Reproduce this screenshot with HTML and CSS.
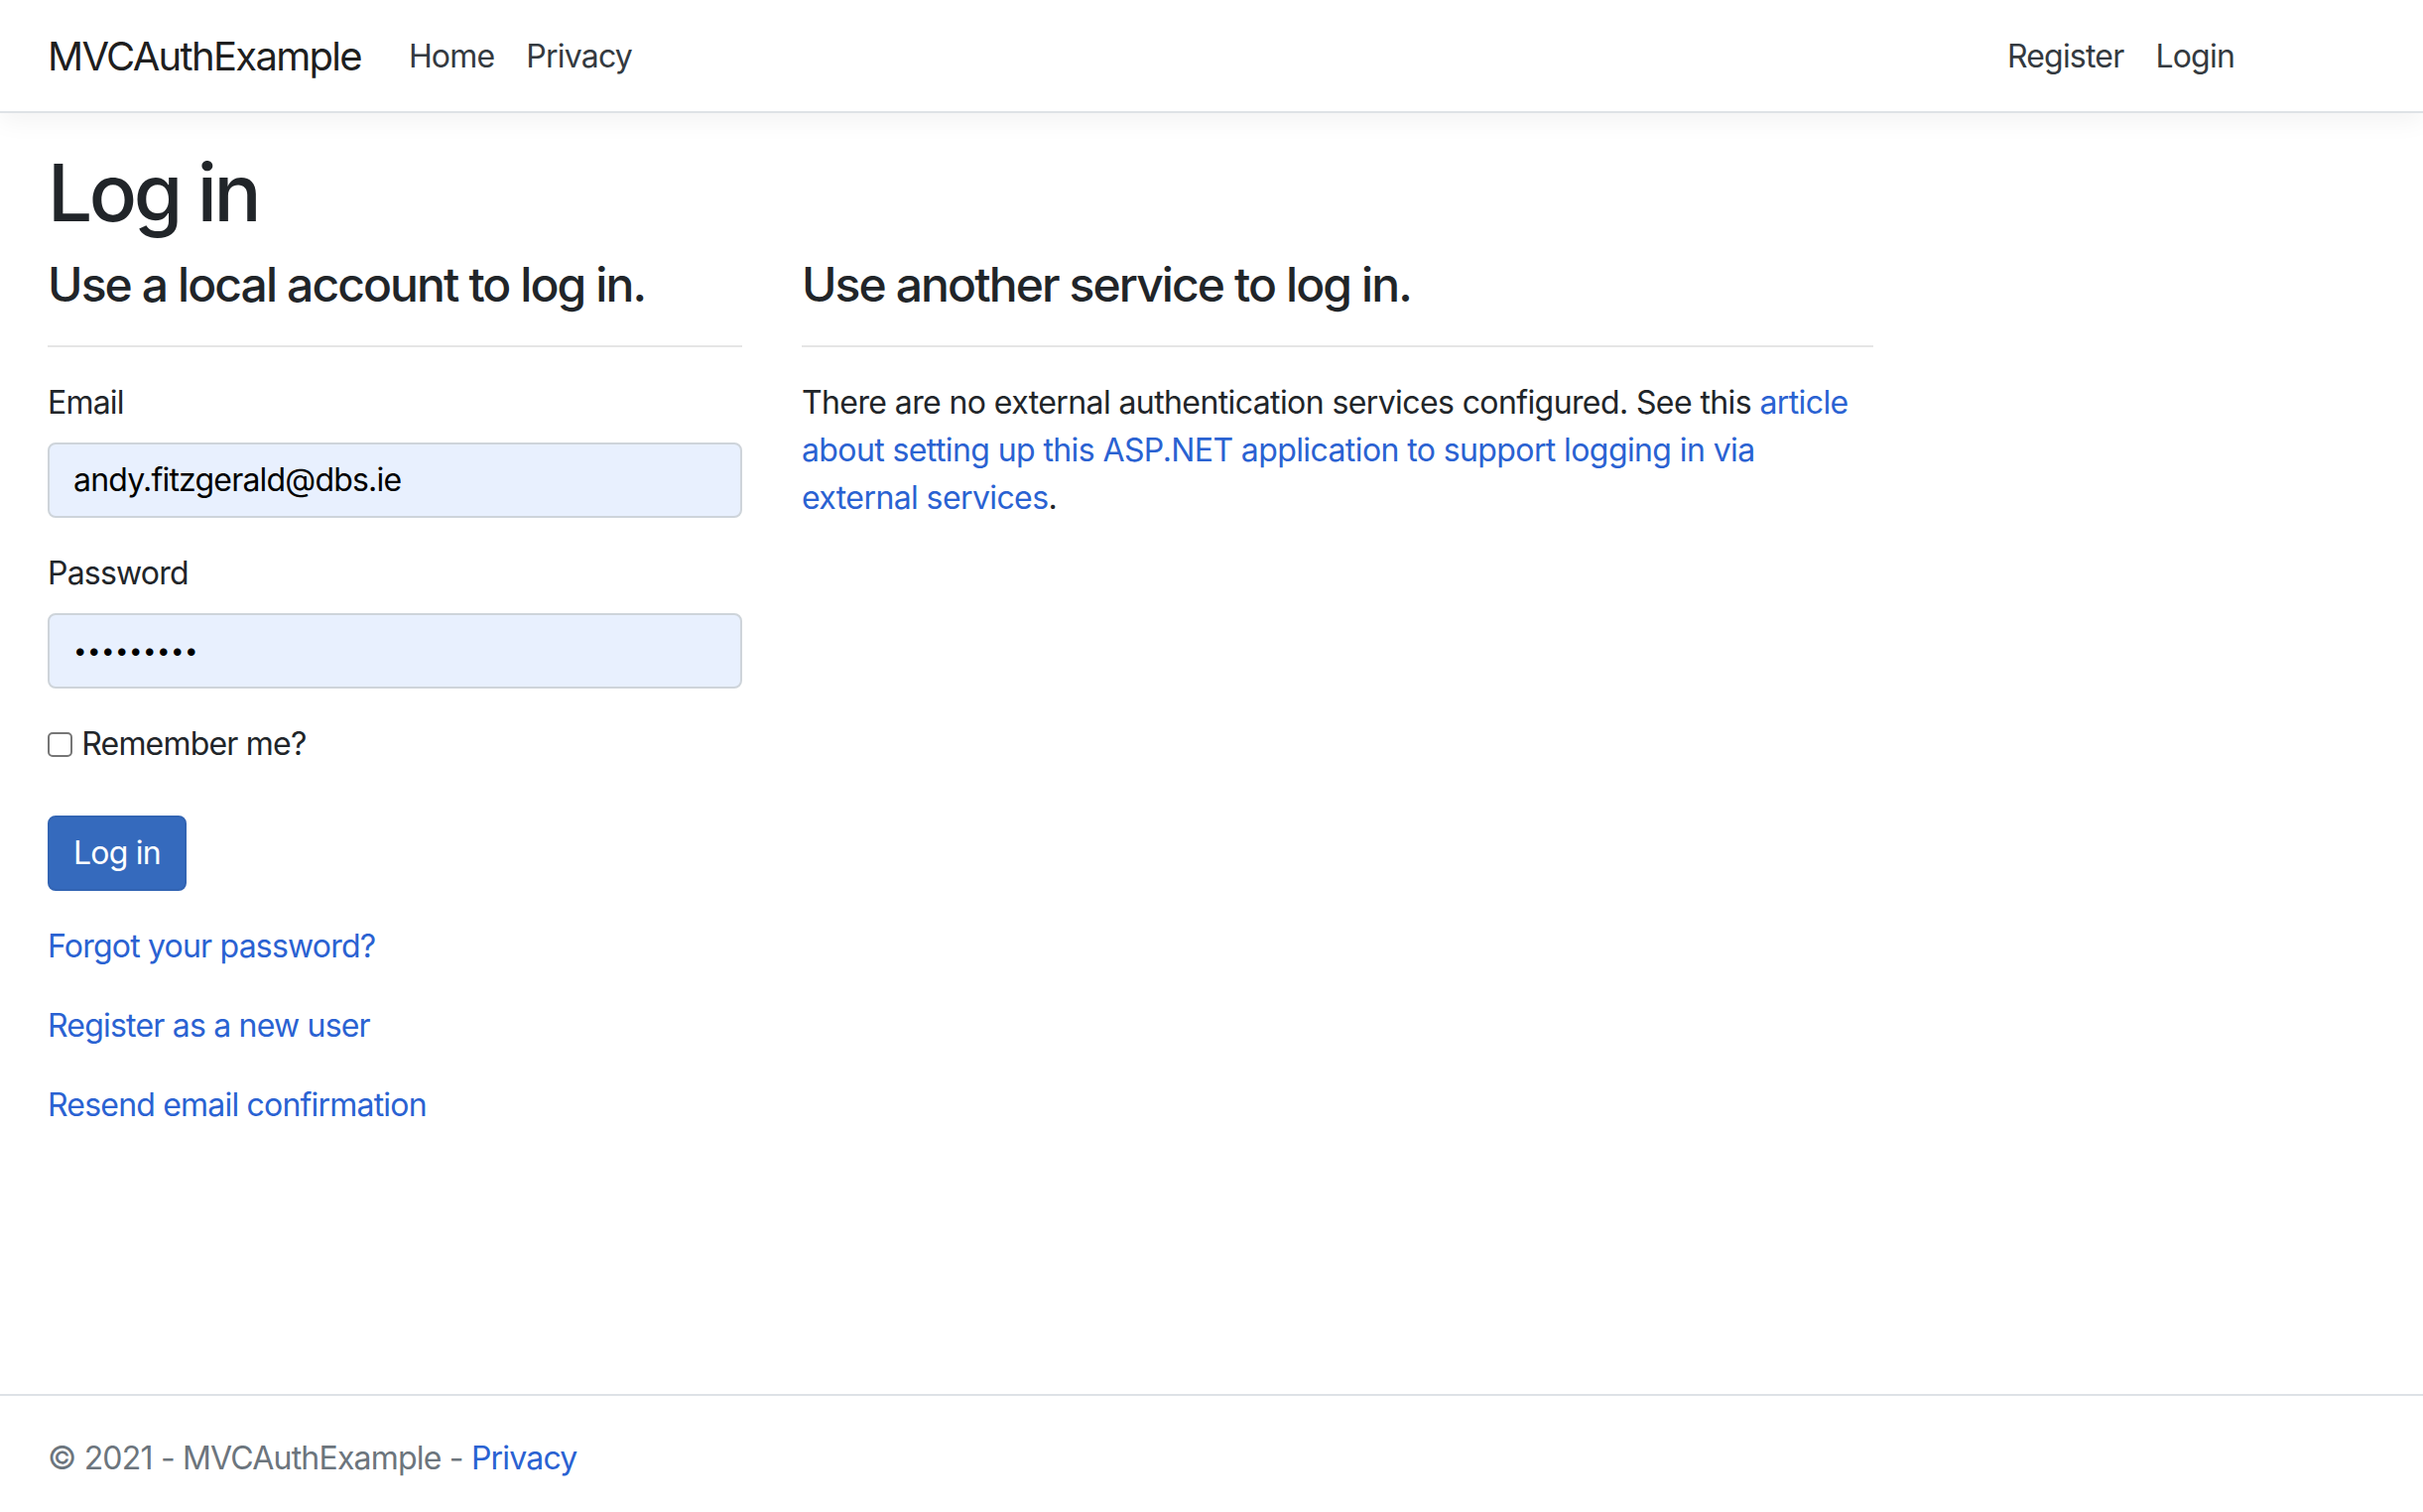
FILE: index.html
```html
<!DOCTYPE html>
<html lang="en">
<head>
<meta charset="utf-8">
<title>Log in - MVCAuthExample</title>
<link rel="stylesheet" href="styles.css">
</head>
<body>
<header>
  <nav class="navbar">
    <div class="nav-container">
      <a class="brand" href="#">MVCAuthExample</a>
      <ul class="nav nav-left">
        <li><a class="nav-link" href="#">Home</a></li>
        <li><a class="nav-link" href="#">Privacy</a></li>
      </ul>
      <ul class="nav nav-right">
        <li><a class="nav-link" href="#">Register</a></li>
        <li><a class="nav-link" href="#">Login</a></li>
      </ul>
    </div>
  </nav>
</header>
<main class="main">
  <div class="container">
    <h1 class="title">Log in</h1>
    <div class="row">
      <div class="col-4">
        <section>
          <form>
            <h4 class="subtitle">Use a local account to log in.</h4>
            <hr class="rule">
            <div class="form-group">
              <label class="label" for="email">Email</label>
              <input class="form-control" id="email" type="email" value="andy.fitzgerald@dbs.ie">
            </div>
            <div class="form-group">
              <label class="label" for="password">Password</label>
              <input class="form-control password" id="password" type="password" value="123456789">
            </div>
            <div class="form-group">
              <div class="checkbox">
                <label class="label" for="remember"><input class="check" id="remember" type="checkbox"> Remember me?</label>
              </div>
            </div>
            <div class="form-group">
              <button class="btn" type="button">Log in</button>
            </div>
            <div class="form-group">
              <p class="para"><a class="link" href="#">Forgot your password?</a></p>
              <p class="para"><a class="link" href="#">Register as a new user</a></p>
              <p class="para"><a class="link" href="#">Resend email confirmation</a></p>
            </div>
          </form>
        </section>
      </div>
      <div class="col-6">
        <section>
          <h4 class="subtitle">Use another service to log in.</h4>
          <hr class="rule">
          <div>
            <p class="para info">There are no external authentication services configured. See this <a class="link" href="#">article about setting up this ASP.NET application to support logging in via external services</a>.</p>
          </div>
        </section>
      </div>
    </div>
  </div>
</main>
<footer class="footer">
  <div class="container">&copy; 2021 - MVCAuthExample - <a class="link" href="#">Privacy</a></div>
</footer>
</body>
</html>
```
FILE: styles.css
```css
* { box-sizing: border-box; }
html { margin: 0; }
body {
  margin: 0;
  min-height: 1530px;
  display: flex;
  flex-direction: column;
  font-family: Inter, "Noto Sans", "Liberation Sans", sans-serif;
  font-size: 32px;
  line-height: 1.5;
  letter-spacing: -0.8px;
  color: #212529;
  background: #fff;
}
a { text-decoration: none; }

.navbar {
  padding: 16px 0;
  background: #fff;
  border-bottom: 2px solid #dee2e6;
  box-shadow: 0 8px 24px rgba(0, 0, 0, 0.05);
  margin-bottom: 32px;
}
.nav-container {
  margin-left: 48px;
  width: 2220px;
  display: flex;
  align-items: center;
}
.brand {
  font-size: 40px;
  line-height: 60px;
  letter-spacing: -1.7px;
  padding: 11px 0 9px;
  margin-right: 32px;
  color: rgba(0, 0, 0, 0.9);
  white-space: nowrap;
}
.nav {
  list-style: none;
  margin: 0;
  padding: 0;
  display: flex;
}
.nav-left { flex-grow: 1; }
.nav-link {
  display: block;
  padding: 17px 16px 15px;
  line-height: 48px;
  color: #343a40;
}

.main {
  flex-grow: 1;
  padding-bottom: 32px;
}
.container {
  margin-left: 18px;
  width: 2280px;
  padding: 0 30px;
}
.title {
  font-size: 80px;
  font-weight: 500;
  line-height: 1.2;
  letter-spacing: -3.4px;
  margin: 0 0 16px;
}
.row {
  display: flex;
  margin: 0 -30px;
}
.col-4 { width: 33.3333%; padding: 0 30px; }
.col-6 { width: 50%; padding: 0 30px; }
.subtitle {
  font-size: 48px;
  font-weight: 500;
  line-height: 1.2;
  letter-spacing: -1.9px;
  margin: 0 0 16px;
}
.rule {
  margin: 32px 0;
  border: 0;
  border-top: 2px solid rgba(0, 0, 0, 0.1);
  height: 0;
}
.form-group { margin-bottom: 32px; }
.label {
  display: inline-block;
  margin-bottom: 16px;
}
.form-control {
  display: block;
  width: 100%;
  height: 76px;
  padding: 12px 24px;
  font: inherit;
  line-height: 48px;
  letter-spacing: -0.8px;
  color: #000;
  background: #e8f0fe;
  border: 2px solid #ced4da;
  border-radius: 8px;
  outline: none;
}
.password {
  font-size: 24px;
  letter-spacing: 0.5px;
}
.check {
  -webkit-appearance: none;
  appearance: none;
  width: 25px;
  height: 25px;
  margin: 0 1px 0 0;
  border: 2px solid #767676;
  border-radius: 5px;
  background: #fff;
  vertical-align: baseline;
  position: relative;
  top: 2px;
}
.btn {
  display: inline-block;
  font: inherit;
  line-height: 48px;
  letter-spacing: -0.8px;
  padding: 12px 24px;
  color: #fff;
  background: #356abd;
  border: 2px solid #3264b3;
  border-radius: 8px;
}
.para { margin: 0 0 32px; }
.info { letter-spacing: -0.6px; }
.link { color: #2a62d2; }

.footer {
  border-top: 2px solid #dee2e6;
  line-height: 120px;
  padding-top: 3px;
  color: #6c757d;
  white-space: nowrap;
}
```
